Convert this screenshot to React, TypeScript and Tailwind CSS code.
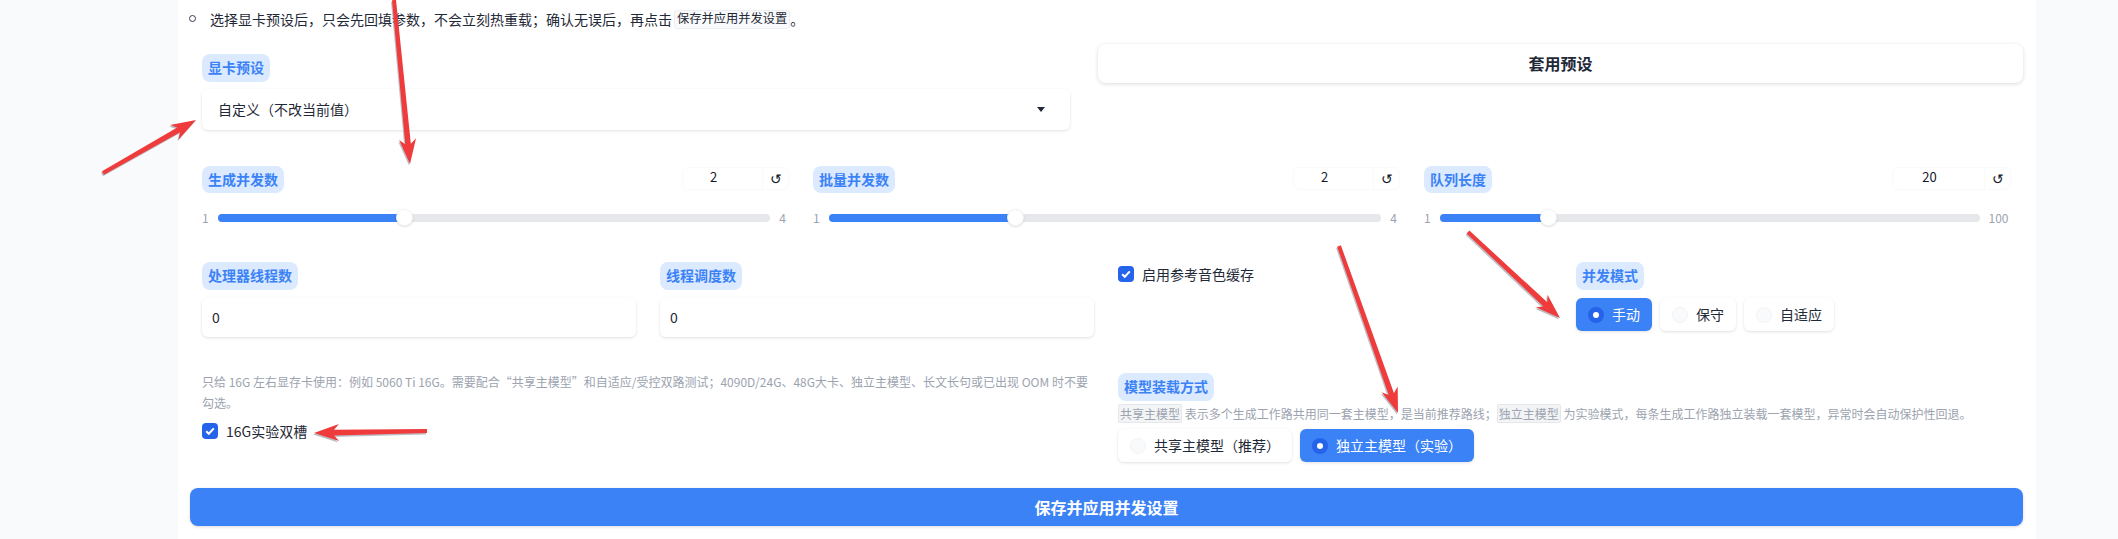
const font = "font-['Noto_Sans_CJK_SC','Noto_Sans',sans-serif]"

function Tag({ children }: { children: string }) {
  return (
    <div className="inline-flex h-[28px] items-center rounded-lg bg-[#dbeafe] px-[6px] pb-[2px] text-sm leading-none font-bold text-[#3b82f6]">
      {children}
    </div>
  )
}

function Check() {
  return (
    <span className="flex h-4 w-4 shrink-0 items-center justify-center rounded-[4px] bg-[#2563eb]">
      <svg viewBox="0 0 16 16" className="h-4 w-4" fill="none">
        <path d="M4.2 8.3l2.6 2.5 5-5.4" stroke="#fff" strokeWidth="2" />
      </svg>
    </span>
  )
}

function Radio({ label, on }: { label: string; on?: boolean }) {
  return (
    <div
      className={
        on
          ? 'flex h-[33px] items-center gap-2 rounded-md bg-[#3b82f6] px-3 text-sm text-white shadow-[0_1px_3px_rgba(0,0,0,0.12)]'
          : 'flex h-[33px] items-center gap-2 rounded-md bg-white px-3 text-sm text-[#1f2937] shadow-[0_1px_3px_rgba(0,0,0,0.12)]'
      }
    >
      {on ? (
        <span className="flex h-4 w-4 items-center justify-center rounded-full bg-[#2563eb]">
          <span className="h-[6px] w-[6px] rounded-full bg-white" />
        </span>
      ) : (
        <span className="h-4 w-4 rounded-full border border-[#f3f4f6] bg-[#f9fafb]" />
      )}
      <span className="mt-[-2px]">{label}</span>
    </div>
  )
}

function SliderBlock({ label, value, max, pct, inputW, maxW }: { label: string; value: string; max: string; pct: number; inputW: string; maxW: string }) {
  return (
    <div className="w-[611px] px-3">
      <div className="flex h-[27px] items-start justify-between">
        <div className="flex h-[27px] items-center rounded-lg bg-[#dbeafe] px-[6px] pb-[2px] text-sm font-bold text-[#3b82f6]">{label}</div>
        <div className="mt-[1px] flex h-[23px] rounded-md border border-[#f9fafb] bg-white text-sm text-[#111827]">
          <div className={`${inputW} flex items-center justify-center pr-[18px] pb-[2px] text-[13px]`}>{value}</div>
          <div className="flex w-[26px] items-center justify-center border-l border-[#f9fafb] pb-[2px] text-sm">↺</div>
        </div>
      </div>
      <div className="mt-[20px] flex h-[10px] items-center">
        <span className="w-[16px] text-xs text-[#9ca3af]">1</span>
        <div className="relative h-2 flex-1 rounded-full bg-[#e5e7eb]">
          <div className="h-2 rounded-full bg-[#3b82f6]" style={{ width: `${pct}%` }} />
          <div
            className="absolute top-[-5px] -ml-2 h-[17px] w-[17px] rounded-full border border-[#f3f4f6] bg-white shadow-sm"
            style={{ left: `${pct}%` }}
          />
        </div>
        <span className={`${maxW} pl-[6px] text-center text-xs text-[#9ca3af]`}>{max}</span>
      </div>
    </div>
  )
}

// 红色标注箭头
function arrowPoints(x1: number, y1: number, x2: number, y2: number) {
  const len = Math.hypot(x2 - x1, y2 - y1)
  const ux = (x2 - x1) / len
  const uy = (y2 - y1) / len
  const nx = -uy
  const ny = ux
  const at = (d: number, w: number) => `${x1 + ux * d + nx * w},${y1 + uy * d + ny * w}`
  const b = len - 20
  return [at(0, -2), at(b, -2.8), at(len - 25, -8.5), at(len, 0), at(len - 25, 8.5), at(b, 2.8), at(0, 2)].join(' ')
}

const arrows = [
  [394, 0, 410, 164],
  [103, 173, 196, 120],
  [1468, 232, 1560, 318],
  [1339, 246, 1398, 413],
  [427, 431, 314, 433],
]

function Arrows() {
  return (
    <svg className="pointer-events-none absolute top-0 left-0" width="2118" height="539">
      {arrows.map((a, i) => (
        <g key={i}>
          <polygon points={arrowPoints(a[0] - 1, a[1] + 1.5, a[2] - 1, a[3] + 1.5)} fill="#6b7280" opacity="0.45" />
          <polygon points={arrowPoints(a[0], a[1], a[2], a[3])} fill="#ef3b3b" />
        </g>
      ))}
    </svg>
  )
}

export default function App() {
  return (
    <div className={`${font} relative h-[539px] w-[2118px] overflow-hidden bg-[#f9fafb]`}>
      <div className="ml-[178px] h-[539px] w-[1858px] bg-white pr-[13px] pl-3">
        {/* 说明 */}
        <div className="flex h-[38px] items-center pb-[1px] text-sm text-[#1f2937]">
          <span className="ml-[-1px] h-[7px] w-[7px] rounded-full border border-[#374151]" />
          <span className="ml-[14px]">选择显卡预设后，只会先回填参数，不会立刻热重载；确认无误后，再点击</span>
          <code className={`${font} mt-[2px] ml-[2px] flex h-[19px] items-center rounded-[3px] border border-[#eceef1] bg-[#f9fafb] px-[2px] pb-[2px] text-[12.25px] leading-none`}>保存并应用并发设置</code>
          <span>。</span>
        </div>

        {/* 显卡预设 */}
        <div className="mt-[6px] flex gap-4">
          <div className="w-[892px] px-3 pt-[10px]">
            <Tag>显卡预设</Tag>
            <div className="mt-[7px] flex h-[41px] items-center justify-between rounded-md bg-white pr-[25px] pl-4 text-sm text-[#1f2937] shadow-[0_1px_3px_rgba(0,0,0,0.12)]">
              <span className="mt-[-2px]">自定义（不改当前值）</span>
              <svg width="8" height="6" viewBox="0 0 8 6"><path d="M0 0h8L4 5z" fill="#1f2937" /></svg>
            </div>
          </div>
          <div className="flex h-[39px] flex-1 items-center justify-center rounded-lg bg-white pb-[2px] text-base font-semibold text-[#1f2937] shadow-[0_1px_4px_rgba(0,0,0,0.14)]">
            套用预设
          </div>
        </div>

        {/* 滑块 */}
        <div className="mt-[36px] flex">
          <SliderBlock label="生成并发数" value="2" max="4" pct={33.76} inputW="w-[79px]" maxW="w-[19px]" />
          <SliderBlock label="批量并发数" value="2" max="4" pct={33.76} inputW="w-[79px]" maxW="w-[19px]" />
          <SliderBlock label="队列长度" value="20" max="100" pct={20} inputW="w-[91px]" maxW="w-[31px]" />
        </div>

        {/* 线程 / 缓存 / 模式 */}
        <div className="mt-[39px] flex">
          <div className="w-[458px] px-3">
            <Tag>处理器线程数</Tag>
            <div className="mt-2 flex h-[39px] items-center rounded-md bg-white pb-[2px] pl-[10px] text-sm text-[#1f2937] shadow-[0_1px_3px_rgba(0,0,0,0.12)]">0</div>
          </div>
          <div className="w-[458px] px-3">
            <Tag>线程调度数</Tag>
            <div className="mt-2 flex h-[39px] items-center rounded-md bg-white pb-[2px] pl-[10px] text-sm text-[#1f2937] shadow-[0_1px_3px_rgba(0,0,0,0.12)]">0</div>
          </div>
          <div className="w-[458px] px-3">
            <label className="mt-[2px] flex items-center gap-2 text-sm text-[#1f2937]">
              <Check />
              启用参考音色缓存
            </label>
          </div>
          <div className="px-3">
            <Tag>并发模式</Tag>
            <div className="mt-2 flex gap-2">
              <Radio label="手动" on />
              <Radio label="保守" />
              <Radio label="自适应" />
            </div>
          </div>
        </div>

        {/* 16G 双槽 / 装载方式 */}
        <div className="mt-[36px] flex">
          <div className="w-[916px] px-3">
            <p className="mt-[-2px] text-xs leading-[21px] text-[#9ca3af]">
              只给 16G 左右显存卡使用：例如 5060 Ti 16G。需要配合“共享主模型”和自适应/受控双路测试；4090D/24G、48G大卡、独立主模型、长文长句或已出现 OOM 时不要勾选。
            </p>
            <label className="mt-[8px] flex items-center gap-2 text-sm text-[#1f2937]">
              <Check />
              16G实验双槽
            </label>
          </div>
          <div className="flex-1 px-3">
            <Tag>模型装载方式</Tag>
            <p className="mt-[2px] h-[22px] text-xs leading-[22px] text-[#9ca3af]">
              <code className={`${font} rounded-[2px] border border-[#e5e7eb] bg-[#f3f4f6] px-[1px]`}>共享主模型</code> 表示多个生成工作路共用同一套主模型，是当前推荐路线；
              <code className={`${font} rounded-[2px] border border-[#e5e7eb] bg-[#f3f4f6] px-[1px]`}>独立主模型</code> 为实验模式，每条生成工作路独立装载一套模型，异常时会自动保护性回退。
            </p>
            <div className="mt-[4px] flex gap-2">
              <Radio label="共享主模型（推荐）" />
              <Radio label="独立主模型（实验）" on />
            </div>
          </div>
        </div>

        <div className="mt-[26px] flex h-[38px] items-center justify-center rounded-lg bg-[#3b82f6] text-base font-bold text-white shadow-[0_1px_3px_rgba(0,0,0,0.15)]">
          保存并应用并发设置
        </div>
      </div>
      <Arrows />
    </div>
  )
}
